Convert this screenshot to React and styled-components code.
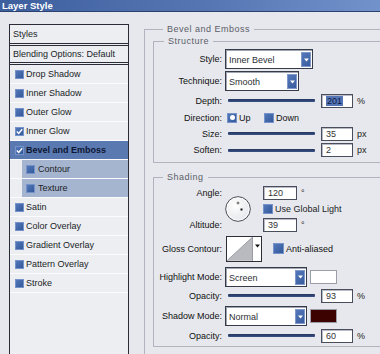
import React from 'react';
import styled, { createGlobalStyle } from 'styled-components';

const Global = createGlobalStyle`
  html, body { margin: 0; padding: 0; }
  body {
    width: 380px; height: 354px; overflow: hidden;
    background: #e7e8ed;
    font-family: "Liberation Sans", Arial, sans-serif;
    font-size: 9px;
    color: #1b1d26;
  }
`;

const Dialog = styled.div`
  width: 380px; height: 354px; overflow: hidden;
  display: flex; flex-direction: column;
`;

const TitleBar = styled.div`
  height: 11px; flex: none;
  background: linear-gradient(to right, #3e5f9e, #5676b3 55%, #7192cb);
  border-bottom: 1px solid #2b4170;
  color: #fff; font-weight: bold; font-size: 9.5px; line-height: 11px;
  padding-left: 2px;
`;

const Body = styled.div`
  display: flex; align-items: flex-start; gap: 15px;
  padding: 12px 0 0 9px;
`;

/* ---------- left list ---------- */
const ListPanel = styled.div`
  width: 120px; height: 340px; flex: none; box-sizing: border-box;
  border: 1px solid #2a2c36;
  background: #eceef2;
  display: flex; flex-direction: column;
`;

const HeaderRow = styled.div`
  height: ${p => p.$h}px; flex: none;
  display: flex; align-items: center; padding-left: 3px;
  border-bottom: 3px double #2a2c36;
`;

const StyleRow = styled.div`
  height: 18px; flex: none; display: flex;
  border-bottom: 1px solid #fbfbfd;
`;

const RowFill = styled.div`
  flex: 1; display: flex; align-items: center;
  gap: ${p => (p.$sub ? 3 : 2)}px;
  margin-left: ${p => (p.$sub ? 12 : 0)}px;
  padding-left: ${p => (p.$sub ? 4 : 5)}px;
  background: ${p => (p.$selected ? '#5b79b1' : p.$sub ? '#a5b4cf' : 'transparent')};
  font-weight: ${p => (p.$selected ? 'bold' : 'normal')};
  color: ${p => (p.$selected ? '#0d1733' : '#1b1d26')};
`;

const Box = styled.span`
  width: ${p => p.$s || 9}px; height: ${p => p.$s || 9}px; flex: none;
  box-sizing: border-box;
  background: linear-gradient(135deg, #5479bb, #34599b);
  border: 1px solid #7593c8;
  display: flex; align-items: center; justify-content: center;
`;

const Dot = styled.span`
  width: 5px; height: 5px; border-radius: 50%; background: #fff;
`;

const Check = () => (
  <svg width="7" height="7" viewBox="0 0 7 7">
    <path d="M0.8 3.6 L2.7 5.5 L6.2 1.2" fill="none" stroke="#fff" strokeWidth="1.4" />
  </svg>
);

/* ---------- right side ---------- */
const Outer = styled.fieldset`
  width: 246px; height: 340px; box-sizing: border-box; flex: none;
  margin: 0; padding: 0 0 0 8px; min-width: 0;
  border: 1px solid #b1b4be;
`;

const Group = styled.fieldset`
  margin: ${p => p.$mt}px 0 0 0; min-width: 0;
  padding: ${p => p.$pt}px 0 ${p => p.$pb}px 0;
  border: 1px solid #b1b4be;
  display: flex; flex-direction: column;
`;

const Legend = styled.legend`
  margin-left: ${p => p.$ml}px; padding: 0 4px;
  font-size: 9px; line-height: 10px; letter-spacing: 0.5px;
  color: #5a5d68;
`;

const Row = styled.div`
  height: ${p => p.$h}px; flex: none;
  display: flex; align-items: center;
`;

const Label = styled.span`
  width: 68px; flex: none; text-align: right; white-space: nowrap;
  margin-right: 3px; color: #111;
`;

const SelectBox = styled.div`
  width: ${p => p.$w}px; height: 20px; box-sizing: border-box; flex: none;
  border: 1px solid #363b4a; background: #fff;
  box-shadow: inset 1px 1px 0 #a2a6b2;
  padding: 2px 1px 1px 1px;
  display: flex; align-items: center; justify-content: space-between;
`;

const SelectText = styled.span`
  padding-left: 2px; color: #2d2f36; padding-top: 1px;
`;

const SelectArrow = styled.span`
  width: 10px; align-self: stretch; box-sizing: border-box;
  background: linear-gradient(135deg, #5478b9, #385c9e);
  border: 1px solid #7d98c9;
  display: flex; align-items: center; justify-content: center;
`;

const Select = ({ w, value }) => (
  <SelectBox $w={w}>
    <SelectText>{value}</SelectText>
    <SelectArrow>
      <svg width="5" height="4" viewBox="0 0 5 4">
        <path d="M0 0.5 H5 L2.5 3.5 Z" fill="#fff" />
      </svg>
    </SelectArrow>
  </SelectBox>
);

const Track = styled.div`
  width: 87px; height: 3px; flex: none; margin: 0 6px 0 3px;
  background: linear-gradient(#22355f, #3a5286);
  border-radius: 1px;
`;

const NumBox = styled.div`
  width: ${p => p.$w || 32}px; height: 14px; box-sizing: border-box; flex: none;
  border: 1px solid #4a4e5c; background: #fff;
  box-shadow: inset 1px 1px 0 #b8bbc5;
  padding-left: 4px; display: flex; align-items: center;
  color: #333;
`;

const Selected = styled.span`
  background: #5675b5; color: #0c1a45; padding: 0 1px;
`;

const Unit = styled.span`
  margin-left: ${p => p.$ml || 4}px; color: #222;
  align-self: ${p => (p.$top ? 'flex-start' : 'auto')};
`;

const Option = styled.span`
  width: ${p => p.$w || 'auto'}; display: flex; align-items: center; gap: 2px;
  margin-left: ${p => p.$ml || 0}px; color: #111;
`;

const AngleGrid = styled.div`
  display: grid; flex: none;
  grid-template-columns: 68px 26px auto;
  grid-template-rows: 15px 15px 15px;
  column-gap: 3px; row-gap: 1px;
  height: 47px; align-items: center;
`;

const GridLabel = styled(Label)`
  grid-column: 1; grid-row: ${p => p.$r};
  margin-right: 0;
`;

const DialCell = styled.div`
  grid-column: 2; grid-row: 1 / 4; width: 26px; height: 26px;
`;

const GridCtl = styled.div`
  grid-column: 3; grid-row: ${p => p.$r};
  display: flex; align-items: center; gap: 2px; margin-left: 9px;
`;

const ContourBox = styled.div`
  width: 36px; height: 26px; box-sizing: border-box; flex: none;
  margin-left: 1px;
  border: 1px solid #2d2f38; background: #fff;
  display: flex;
`;

const ContourArrow = styled.span`
  width: 8px; display: flex; justify-content: center; padding-top: 7px;
  border-left: 1px solid #9a9ca6;
`;

const Swatch = styled.div`
  width: 27px; height: 14px; box-sizing: border-box; flex: none;
  margin-left: 3px;
  border: 1px solid #9b9ea8;
  background: ${p => p.$c};
`;

const Dial = () => (
  <svg width="26" height="26" viewBox="0 0 26 26">
    <defs>
      <radialGradient id="dg" cx="0.4" cy="0.35" r="0.7">
        <stop offset="0" stopColor="#ffffff" />
        <stop offset="1" stopColor="#e4e5ea" />
      </radialGradient>
    </defs>
    <circle cx="13" cy="13" r="12.3" fill="url(#dg)" stroke="#4a4d57" strokeWidth="1" />
    <circle cx="13" cy="13" r="11" fill="none" stroke="#ffffff" strokeWidth="0.8" />
    <path d="M13 5.5 V8.5 M11.5 7 H14.5" stroke="#444" strokeWidth="0.8" />
    <rect x="15.5" y="12.5" width="2" height="2" fill="#111" />
  </svg>
);

const items = [
  { name: 'Drop Shadow' },
  { name: 'Inner Shadow' },
  { name: 'Outer Glow' },
  { name: 'Inner Glow', checked: true },
  { name: 'Bevel and Emboss', checked: true, selected: true },
  { name: 'Contour', sub: true },
  { name: 'Texture', sub: true },
  { name: 'Satin' },
  { name: 'Color Overlay' },
  { name: 'Gradient Overlay' },
  { name: 'Pattern Overlay' },
  { name: 'Stroke' },
];

const SliderRow = ({ h, label, value, unit, selected }) => (
  <Row $h={h}>
    <Label>{label}</Label>
    <Track />
    <NumBox>{selected ? <Selected>{value}</Selected> : value}</NumBox>
    <Unit>{unit}</Unit>
  </Row>
);

export default function App() {
  return (
    <>
      <Global />
      <Dialog>
        <TitleBar>Layer Style</TitleBar>
        <Body>
          <ListPanel>
            <HeaderRow $h={18}>Styles</HeaderRow>
            <HeaderRow $h={16}>Blending Options: Default</HeaderRow>
            {items.map(it => (
              <StyleRow key={it.name}>
                <RowFill $sub={it.sub} $selected={it.selected}>
                  <Box>{it.checked && <Check />}</Box>
                  <span>{it.name}</span>
                </RowFill>
              </StyleRow>
            ))}
          </ListPanel>

          <Outer>
            <Legend $ml={10}>Bevel and Emboss</Legend>
            <Group $mt={2} $pt={2} $pb={3}>
              <Legend $ml={10}>Structure</Legend>
              <Row $h={22}>
                <Label>Style:</Label>
                <Select w={88} value="Inner Bevel" />
              </Row>
              <Row $h={22}>
                <Label>Technique:</Label>
                <Select w={74} value="Smooth" />
              </Row>
              <SliderRow h={17} label="Depth:" value="201" unit="%" selected />
              <Row $h={17}>
                <Label>Direction:</Label>
                <Option $w="37px" $ml={2}>
                  <Box $s={10}><Dot /></Box>
                  <span>Up</span>
                </Option>
                <Option>
                  <Box $s={10} />
                  <span>Down</span>
                </Option>
              </Row>
              <SliderRow h={15} label="Size:" value="35" unit="px" />
              <SliderRow h={18} label="Soften:" value="2" unit="px" />
            </Group>

            <Group $mt={9} $pt={3} $pb={4}>
              <Legend $ml={9}>Shading</Legend>
              <AngleGrid>
                <GridLabel $r={1}>Angle:</GridLabel>
                <GridLabel $r={3}>Altitude:</GridLabel>
                <DialCell><Dial /></DialCell>
                <GridCtl $r={1}>
                  <NumBox $w={34}>120</NumBox>
                  <Unit $ml={2}>°</Unit>
                </GridCtl>
                <GridCtl $r={2}>
                  <Box $s={10} />
                  <span>Use Global Light</span>
                </GridCtl>
                <GridCtl $r={3}>
                  <NumBox $w={34}>39</NumBox>
                  <Unit $ml={2}>°</Unit>
                </GridCtl>
              </AngleGrid>
              <Row $h={33}>
                <Label>Gloss Contour:</Label>
                <ContourBox>
                  <svg width="26" height="24" viewBox="0 0 26 24">
                    <path d="M0 24 L26 0 L26 24 Z" fill="#b9babf" />
                    <path d="M0 24 L26 0" stroke="#8d8f96" strokeWidth="0.8" />
                  </svg>
                  <ContourArrow>
                    <svg width="5" height="4" viewBox="0 0 5 4">
                      <path d="M0 0.5 H5 L2.5 3.5 Z" fill="#111" />
                    </svg>
                  </ContourArrow>
                </ContourBox>
                <Option $ml={11}>
                  <Box $s={11} />
                  <span>Anti-aliased</span>
                </Option>
              </Row>
              <Row $h={23}>
                <Label>Highlight Mode:</Label>
                <Select w={82} value="Screen" />
                <Swatch $c="#ffffff" />
              </Row>
              <SliderRow h={15} label="Opacity:" value="93" unit="%" />
              <Row $h={26}>
                <Label>Shadow Mode:</Label>
                <Select w={82} value="Normal" />
                <Swatch $c="#3c0202" />
              </Row>
              <SliderRow h={13} label="Opacity:" value="60" unit="%" />
            </Group>
          </Outer>
        </Body>
      </Dialog>
    </>
  );
}
